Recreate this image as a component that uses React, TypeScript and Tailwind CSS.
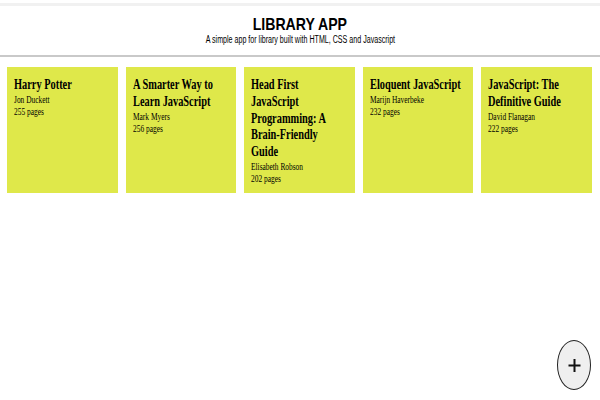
const books = [
  { title: "Harry Potter", author: "Jon Duckett", pages: 255 },
  { title: "A Smarter Way to Learn JavaScript", author: "Mark Myers", pages: 256 },
  { title: "Head First JavaScript Programming: A Brain-Friendly Guide", author: "Elisabeth Robson", pages: 202 },
  { title: "Eloquent JavaScript", author: "Marijn Haverbeke", pages: 232 },
  { title: "JavaScript: The Definitive Guide", author: "David Flanagan", pages: 222 },
];

function BookCard({ title, author, pages }: { title: string; author: string; pages: number }) {
  return (
    <div className="h-[126px] bg-[#dfe84a] px-[7px] py-[10px] overflow-hidden">
      {/* text is laid out wider and squeezed, like the condensed type in the shot */}
      <div className="w-[127px] origin-left scale-x-[0.74] font-['Liberation_Serif',serif] text-black">
        <h2 className="text-[14px] leading-[16.8px] font-bold">{title}</h2>
        <p className="text-[10px] leading-[12px]">{author}</p>
        <p className="text-[10px] leading-[12px]">{pages} pages</p>
      </div>
    </div>
  );
}

export default function App() {
  return (
    <div className="relative h-[400px] w-[600px] bg-white font-['Liberation_Sans',Arial,sans-serif]">
      <header className="mt-[3px] border-t-[3px] border-[#f1f1f1] border-b-2 border-b-[#c9c9c9] bg-white h-[54px] flex flex-col items-center pt-[9px]">
        <h1 className="text-[17px] leading-[20px] font-bold text-black scale-x-[0.83]">LIBRARY APP</h1>
        <p className="text-[10px] leading-[12px] text-black whitespace-nowrap scale-x-[0.71] -mt-[1px]">
          A simple app for library built with HTML, CSS and Javascript
        </p>
      </header>
      <main className="grid grid-cols-5 gap-[8px] pl-[7px] pr-[8px] pt-[10px]">
        {books.map((b) => (
          <BookCard key={b.title} {...b} />
        ))}
      </main>
      <button className="absolute right-[9px] bottom-[13px] w-[34px] h-[50px] rounded-[50%] border border-[#222] bg-[#efefef] flex items-center justify-center">
        <svg width="13" height="15" viewBox="0 0 13 15">
          <path d="M6.5 1v13M0.5 7.5h12" stroke="#111" strokeWidth="2" />
        </svg>
      </button>
    </div>
  );
}
